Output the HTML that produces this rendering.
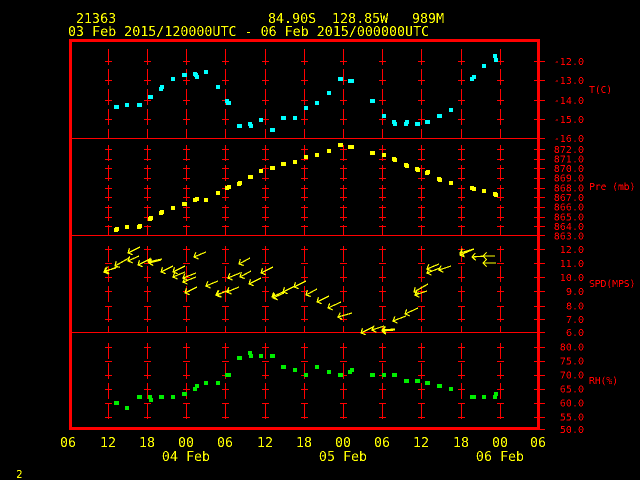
<!DOCTYPE html>
<html><head><meta charset="utf-8"><style>
html,body{margin:0;padding:0;background:#000;width:640px;height:480px;overflow:hidden}
svg{display:block}
text{font-family:"DejaVu Sans Mono","Liberation Mono",monospace;white-space:pre}
.y{fill:#ff0;font-size:13.33px}
.c{text-anchor:middle}
.r{fill:#f00;font-size:10px;text-anchor:end}
.l{fill:#f00;font-size:10px;letter-spacing:-.25px}
</style></head><body>
<svg width="640" height="480" viewBox="0 0 640 480" shape-rendering="crispEdges">
<defs>
<filter id="b" x="0" y="0" width="640" height="480" filterUnits="userSpaceOnUse" color-interpolation-filters="sRGB"><feComponentTransfer><feFuncA type="discrete" tableValues="0 1"/></feComponentTransfer></filter>
<marker id="a" markerUnits="userSpaceOnUse" orient="auto" overflow="visible" markerWidth="12" markerHeight="12" refX="0" refY="0"><path d="M-3.5 -3.6L0 0L-3.5 3.6" fill="none" stroke="#ff0" stroke-width="1.2" shape-rendering="crispEdges"/></marker>
<g id="t" stroke="#f00" fill="none">
<path d="M-3 61.5h7M-3 80.5h7M-3 100.5h7M-3 119.5h7M-3 149.5h7M-3 159.5h7M-3 168.5h7M-3 178.5h7M-3 188.5h7M-3 197.5h7M-3 207.5h7M-3 217.5h7M-3 226.5h7M-3 249.5h7M-3 263.5h7M-3 277.5h7M-3 291.5h7M-3 306.5h7M-3 319.5h7M-3 347.5h7M-3 361.5h7M-3 375.5h7M-3 389.5h7M-3 403.5h7M-3 417.5h7"/>
<path stroke-dasharray="16 4" d="M.5 49V138M.5 145V235M.5 246V332M.5 343V419"/>
</g>
</defs>
<rect width="640" height="480" fill="#000"/>
<use href="#t" x="108"/><use href="#t" x="147"/><use href="#t" x="186"/><use href="#t" x="225"/><use href="#t" x="265"/><use href="#t" x="304"/><use href="#t" x="343"/><use href="#t" x="382"/><use href="#t" x="421"/><use href="#t" x="461"/><use href="#t" x="500"/>
<path fill="none" stroke="#f00" d="M534 61.5h11M534 80.5h11M534 100.5h11M534 119.5h11M534 149.5h11M534 159.5h11M534 168.5h11M534 178.5h11M534 188.5h11M534 197.5h11M534 207.5h11M534 217.5h11M534 226.5h11M534 249.5h11M534 263.5h11M534 277.5h11M534 291.5h11M534 306.5h11M534 319.5h11M534 347.5h11M534 361.5h11M534 375.5h11M534 389.5h11M534 403.5h11M534 417.5h11M540 429.5h5M70 138.5h475M70 235.5h475M70 332.5h475"/>
<rect x="70.5" y="40.5" width="468" height="388" fill="none" stroke="#f00" stroke-width="3"/>
<g fill="none" stroke-width="4">
<path stroke="#0ff" d="M114 107h5M125 105h4M137 105h5M148 97h5M159 89h4M160 87h4M171 79h4M182 75h5M193 74h4M194 75h4M195 77h4M204 72h4M216 87h4M225 101h4M226 103h5M237 126h5M248 124h4M249 126h4M259 120h4M270 130h5M281 118h5M293 118h4M304 108h4M315 103h4M327 93h4M338 79h5M348 81h6M370 101h5M382 116h4M392 122h4M393 124h4M404 124h4M405 122h4M415 124h5M425 122h5M437 116h5M449 110h4M470 79h4M472 77h4M482 66h4M493 56h4M494 60h4"/>
<path stroke="#ff0" d="M114 230h4M115 229h4M125 227h4M137 227h4M138 226h4M148 219h4M149 218h4M159 213h4M160 212h4M171 208h4M182 204h5M193 200h4M195 199h4M204 200h4M216 193h4M225 188h4M227 187h4M237 184h4M238 183h4M248 177h5M259 171h4M270 168h5M281 164h5M293 162h4M304 157h4M315 155h4M327 151h4M338 145h5M348 147h6M370 153h5M382 155h4M392 159h4M393 160h4M404 165h4M405 166h4M415 169h4M416 170h4M425 173h4M426 172h4M437 179h4M438 180h4M449 183h4M470 188h4M472 189h4M482 191h4M493 194h4M494 195h4"/>
<path stroke="#0e0" d="M114 403h5M125 408h4M137 397h5M148 397h4M149 400h4M159 397h5M171 397h4M182 394h5M193 389h4M195 386h4M204 383h4M216 383h4M225 375h6M237 358h5M248 353h4M249 356h4M259 356h4M270 356h5M281 367h5M293 370h4M304 375h4M315 367h4M327 372h4M338 375h5M348 372h4M350 370h4M370 375h5M382 375h4M392 375h5M404 381h5M415 381h5M425 383h5M437 386h5M449 389h4M470 397h6M482 397h4M493 397h4M494 394h4"/>
</g>
<g fill="none" stroke="#ff0" stroke-width="1.2" marker-end="url(#a)">
<path d="M117 267L104 272"/><path d="M116 268L105 271"/><path d="M129 258L115 266"/><path d="M139 256L128 261"/><path d="M140 247L128 253"/><path d="M150 259L138 265"/><path d="M162 259L148 262"/><path d="M161 260L149 263"/><path d="M173 266L161 272"/><path d="M185 266L173 272"/><path d="M185 272L173 277"/><path d="M196 273L183 278"/><path d="M196 277L183 282"/><path d="M197 287L185 293"/><path d="M206 252L194 257"/><path d="M218 281L206 286"/><path d="M227 291L216 295"/><path d="M229 290L217 295"/><path d="M239 287L227 292"/><path d="M240 273L228 278"/><path d="M250 258L239 264"/><path d="M251 271L240 277"/><path d="M261 278L249 284"/><path d="M273 267L261 273"/><path d="M283 292L272 297"/><path d="M284 293L273 298"/><path d="M295 286L283 292"/><path d="M306 281L294 287"/><path d="M317 289L306 295"/><path d="M329 296L317 302"/><path d="M341 302L328 308"/><path d="M352 313L338 317"/><path d="M373 327L361 333"/><path d="M384 326L372 330"/><path d="M395 329L382 330"/><path d="M395 330L382 331"/><path d="M406 316L393 321"/><path d="M418 308L405 314"/><path d="M428 284L414 292"/><path d="M427 291L415 295"/><path d="M439 264L427 269"/><path d="M440 268L427 273"/><path d="M451 266L439 270"/><path d="M474 249L460 253"/><path d="M474 249L460 255"/><path d="M485 256L472 257"/><path d="M495 256L483 256"/><path d="M496 263L483 263"/>
</g>
<g filter="url(#b)">
<text class="y" x="76" y="23">21363</text>
<text class="y" x="268" y="23">84.90S</text>
<text class="y" x="332" y="23">128.85W</text>
<text class="y" x="412" y="23">989M</text>
<text class="y" x="68" y="36">03 Feb 2015/120000UTC - 06 Feb 2015/000000UTC</text>
<text class="y c" x="68" y="447">06</text><text class="y c" x="108" y="447">12</text><text class="y c" x="147" y="447">18</text><text class="y c" x="186" y="447">00</text><text class="y c" x="225" y="447">06</text><text class="y c" x="265" y="447">12</text><text class="y c" x="304" y="447">18</text><text class="y c" x="343" y="447">00</text><text class="y c" x="382" y="447">06</text><text class="y c" x="421" y="447">12</text><text class="y c" x="461" y="447">18</text><text class="y c" x="500" y="447">00</text><text class="y c" x="538" y="447">06</text>
<text class="y c" x="186" y="461">04 Feb</text><text class="y c" x="343" y="461">05 Feb</text><text class="y c" x="500" y="461">06 Feb</text>
<text x="16" y="478" fill="#ff0" font-size="11">2</text>
<text class="r" x="584" y="65">-12.0</text><text class="r" x="584" y="84">-13.0</text><text class="r" x="584" y="104">-14.0</text><text class="r" x="584" y="123">-15.0</text><text class="r" x="584" y="142">-16.0</text>
<text class="r" x="584" y="153">872.0</text><text class="r" x="584" y="162.500">871.0</text><text class="r" x="584" y="172">870.0</text><text class="r" x="584" y="181.500">869.0</text><text class="r" x="584" y="191.500">868.0</text><text class="r" x="584" y="201">867.0</text><text class="r" x="584" y="210.500">866.0</text><text class="r" x="584" y="220.500">865.0</text><text class="r" x="584" y="230">864.0</text><text class="r" x="584" y="239.500">863.0</text>
<text class="r" x="584" y="253">12.0</text><text class="r" x="584" y="267">11.0</text><text class="r" x="584" y="281">10.0</text><text class="r" x="584" y="295">9.0</text><text class="r" x="584" y="309.500">8.0</text><text class="r" x="584" y="323">7.0</text><text class="r" x="584" y="336">6.0</text>
<text class="r" x="584" y="350.500">80.0</text><text class="r" x="584" y="364.500">75.0</text><text class="r" x="584" y="378.500">70.0</text><text class="r" x="584" y="392.500">65.0</text><text class="r" x="584" y="406.500">60.0</text><text class="r" x="584" y="420.500">55.0</text><text class="r" x="584" y="433">50.0</text>
<text class="l" x="589" y="93">T(C)</text><text class="l" x="589" y="190">Pre (mb)</text><text class="l" x="589" y="287">SPD(MPS)</text><text class="l" x="589" y="384">RH(%)</text>
</g>
</svg>
</body></html>
